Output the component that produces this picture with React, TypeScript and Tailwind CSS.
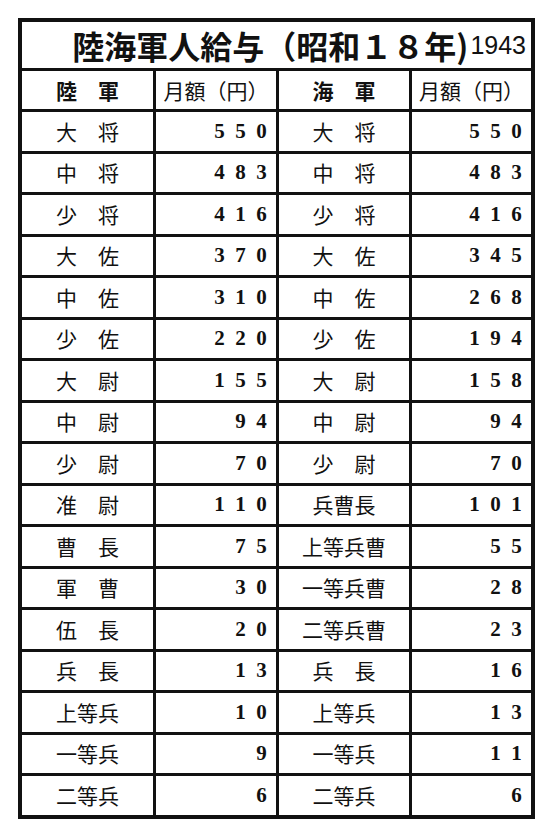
import React from 'react';

interface Row {
  army: string;
  armyPay: string;
  navy: string;
  navyPay: string;
}

const rows: Row[] = [
  { army: '大　将', armyPay: '550', navy: '大　将', navyPay: '550' },
  { army: '中　将', armyPay: '483', navy: '中　将', navyPay: '483' },
  { army: '少　将', armyPay: '416', navy: '少　将', navyPay: '416' },
  { army: '大　佐', armyPay: '370', navy: '大　佐', navyPay: '345' },
  { army: '中　佐', armyPay: '310', navy: '中　佐', navyPay: '268' },
  { army: '少　佐', armyPay: '220', navy: '少　佐', navyPay: '194' },
  { army: '大　尉', armyPay: '155', navy: '大　尉', navyPay: '158' },
  { army: '中　尉', armyPay: '94', navy: '中　尉', navyPay: '94' },
  { army: '少　尉', armyPay: '70', navy: '少　尉', navyPay: '70' },
  { army: '准　尉', armyPay: '110', navy: '兵曹長', navyPay: '101' },
  { army: '曹　長', armyPay: '75', navy: '上等兵曹', navyPay: '55' },
  { army: '軍　曹', armyPay: '30', navy: '一等兵曹', navyPay: '28' },
  { army: '伍　長', armyPay: '20', navy: '二等兵曹', navyPay: '23' },
  { army: '兵　長', armyPay: '13', navy: '兵　長', navyPay: '16' },
  { army: '上等兵', armyPay: '10', navy: '上等兵', navyPay: '13' },
  { army: '一等兵', armyPay: '9', navy: '一等兵', navyPay: '11' },
  { army: '二等兵', armyPay: '6', navy: '二等兵', navyPay: '6' },
];

const jp = { fontFamily: '"Noto Sans CJK JP", "Noto Sans", sans-serif' };
const serif = { fontFamily: '"Liberation Serif", "DejaVu Serif", serif' };

// full-width style digits: each digit sits in its own 21px slot
const Pay: React.FC<{ value: string }> = ({ value }) => (
  <div className="flex h-full items-center justify-end pr-[4px]" style={serif}>
    {value.split('').map((d, i) => (
      <span key={i} className="inline-block w-[21px] text-center text-[21px] font-bold leading-none">
        {d}
      </span>
    ))}
  </div>
);

const Name: React.FC<{ value: string }> = ({ value }) => (
  <div className="flex h-full items-center justify-center text-[21px] leading-none" style={jp}>
    {value}
  </div>
);

const App: React.FC = () => {
  return (
    <div className="min-h-[826px] w-[546px] bg-white pt-[18px] pl-[18px] text-[#111]">
      <div className="w-[517px] border-[4px] border-[#111] bg-white">
        {/* Title */}
        <div className="flex h-[49px] items-center justify-end border-b-[3px] border-[#111] pr-[5px]">
          <span className="text-[32px] font-bold leading-none" style={jp}>
            陸海軍人給与（昭和１８年)
          </span>
          <span className="ml-[2px] text-[25px] leading-none" style={{ fontFamily: '"Liberation Sans", Arial, sans-serif' }}>
            1943
          </span>
        </div>

        {/* Header */}
        <div className="grid h-[41px] grid-cols-[131px_123px_133px_122px] border-b-[3px] border-[#111]">
          <div className="flex items-center justify-center text-[21px] font-bold leading-none" style={jp}>
            陸　軍
          </div>
          <div className="flex items-center justify-center border-l-[3px] border-[#111] text-[21px] leading-none" style={jp}>
            月額（円）
          </div>
          <div className="flex items-center justify-center border-l-[3px] border-[#111] text-[21px] font-bold leading-none" style={jp}>
            海　軍
          </div>
          <div className="flex items-center justify-center border-l-[3px] border-[#111] text-[21px] leading-none" style={jp}>
            月額（円）
          </div>
        </div>

        {/* Body */}
        {rows.map((r, i) => (
          <div
            key={i}
            className={`grid grid-cols-[131px_123px_133px_122px] ${
              i < rows.length - 1 ? 'h-[41.5px] border-b-[3px] border-[#111]' : 'h-[38.5px]'
            }`}
          >
            <Name value={r.army} />
            <div className="border-l-[3px] border-[#111]">
              <Pay value={r.armyPay} />
            </div>
            <div className="border-l-[3px] border-[#111]">
              <Name value={r.navy} />
            </div>
            <div className="border-l-[3px] border-[#111]">
              <Pay value={r.navyPay} />
            </div>
          </div>
        ))}
      </div>
    </div>
  );
};

export default App;
